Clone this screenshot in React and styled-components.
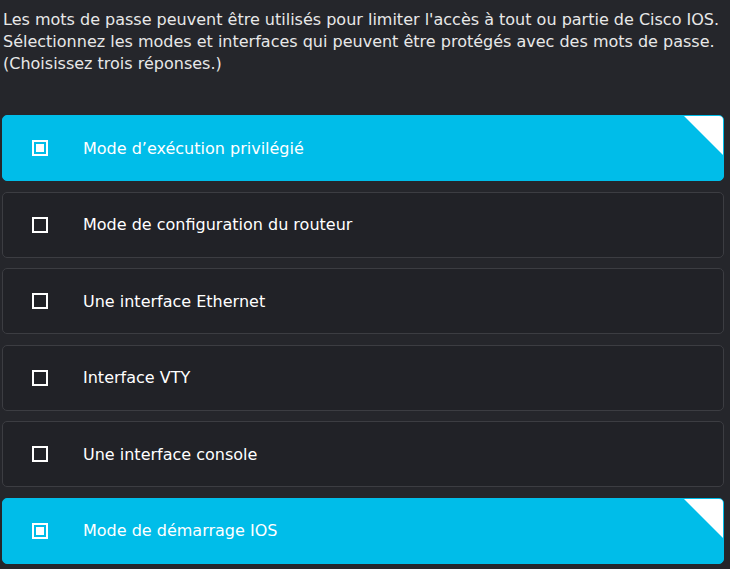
import * as React from 'react'
import styled, { createGlobalStyle } from 'styled-components'

const GlobalStyle = createGlobalStyle`
  html, body {
    margin: 0;
    padding: 0;
    background: #25262b;
  }
  body {
    font-family: "DejaVu Sans", "Noto Sans", sans-serif;
    color: #e6e6e6;
    overflow: hidden;
  }
`

const Page = styled.div`
  width: 730px;
  height: 569px;
  padding: 0 6px 0 2px;
  box-sizing: border-box;
`

const Question = styled.p`
  margin: 0;
  padding: 9px 0 0 1px;
  font-size: 16px;
  line-height: 22px;
  color: #e8e8e8;
`

const Answers = styled.div`
  display: flex;
  flex-direction: column;
  gap: 10.6px;
  margin-top: 40px;
`

const Card = styled.div`
  position: relative;
  height: 66px;
  box-sizing: border-box;
  display: flex;
  align-items: center;
  border-radius: 5px;
  overflow: hidden;
  background: ${p => (p.$selected ? '#00bde9' : '#212227')};
  border: 1px solid ${p => (p.$selected ? '#00bde9' : '#3c3d42')};
  color: #ffffff;
`

const Corner = styled.div`
  position: absolute;
  top: 0;
  right: 0;
  width: 0;
  height: 0;
  border-style: solid;
  border-width: 0 39px 39px 0;
  border-color: transparent #ffffff transparent transparent;
`

const Box = styled.span`
  width: 16px;
  height: 16px;
  box-sizing: border-box;
  border: 2px solid #ffffff;
  margin-left: 29px;
  display: flex;
  align-items: center;
  justify-content: center;
  flex-shrink: 0;

  &::after {
    content: '';
    display: ${p => (p.$checked ? 'block' : 'none')};
    width: 8px;
    height: 8px;
    background: #ffffff;
  }
`

const Label = styled.span`
  margin-left: 35px;
  font-size: 16px;
`

const answers = [
  { text: 'Mode d’exécution privilégié', selected: true },
  { text: 'Mode de configuration du routeur', selected: false },
  { text: 'Une interface Ethernet', selected: false },
  { text: 'Interface VTY', selected: false },
  { text: 'Une interface console', selected: false },
  { text: 'Mode de démarrage IOS', selected: true },
]

export default function App() {
  return (
    <Page>
      <GlobalStyle />
      <Question>
        Les mots de passe peuvent être utilisés pour limiter l'accès à tout ou partie de Cisco IOS.
        <br />
        Sélectionnez les modes et interfaces qui peuvent être protégés avec des mots de passe.
        <br />
        (Choisissez trois réponses.)
      </Question>
      <Answers>
        {answers.map(a => (
          <Card key={a.text} $selected={a.selected}>
            <Box $checked={a.selected} />
            <Label>{a.text}</Label>
            {a.selected && <Corner />}
          </Card>
        ))}
      </Answers>
    </Page>
  )
}
